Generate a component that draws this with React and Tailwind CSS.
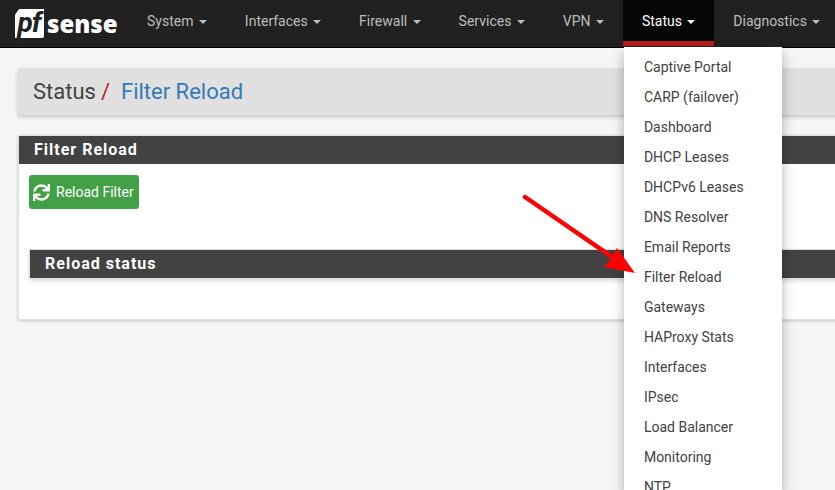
import React from 'react';
import { FaSync } from 'react-icons/fa';

const navItems = ['System', 'Interfaces', 'Firewall', 'Services', 'VPN', 'Status', 'Diagnostics'];

const statusItems = [
  'Captive Portal',
  'CARP (failover)',
  'Dashboard',
  'DHCP Leases',
  'DHCPv6 Leases',
  'DNS Resolver',
  'Email Reports',
  'Filter Reload',
  'Gateways',
  'HAProxy Stats',
  'Interfaces',
  'IPsec',
  'Load Balancer',
  'Monitoring',
  'NTP',
];

const Caret = () => (
  <span className="inline-block ml-[5.4px] align-middle w-0 h-0 border-x-[4px] border-x-transparent border-t-[4px] border-t-current" />
);

const Logo = () => (
  <div className="flex items-center w-[128px] pl-[15px] shrink-0">
    <div className="w-[29px] h-[29px] bg-white rounded-br-[2px] flex items-center justify-center [clip-path:polygon(14%_0,100%_0,100%_100%,0_100%,0_20%)]">
      <span className="text-[#212121] text-[28px] leading-none font-bold italic tracking-[-1px] -ml-[1px] -mt-[2px] font-['Roboto',sans-serif]">pf</span>
    </div>
    <span className="text-white text-[24px] leading-none font-extrabold ml-[3px] font-['Open_Sans',sans-serif]">sense</span>
  </div>
);

const Navbar = () => (
  <nav className="relative h-[48px] bg-[#212121] border-b border-black flex">
    <Logo />
    {navItems.map((item) => {
      const active = item === 'Status';
      return (
        <div
          key={item}
          className={`relative px-[19px] h-[46px] text-[14px] leading-[42px] whitespace-nowrap ${
            active
              ? 'bg-[#050505] text-white border-b-[5px] border-[#b71c1c]'
              : 'text-[#bdbdbd]'
          }`}
        >
          {item}
          <Caret />
          {active && <StatusMenu />}
        </div>
      );
    })}
  </nav>
);

const StatusMenu = () => (
  <ul className="absolute z-10 left-[1px] top-[47px] w-[158px] h-[443px] pt-[5px] bg-white shadow-[0_6px_12px_rgba(0,0,0,0.3)]">
    {statusItems.map((item) => (
      <li key={item} className="h-[30px] px-[20px] text-[14px] leading-[30px] text-[#424242]">
        {item}
      </li>
    ))}
  </ul>
);

const PanelHeading = ({ children }) => (
  <div className="h-[28px] bg-[#424242] px-[15px] text-white text-[16px] leading-[28px] font-bold tracking-[1px]">
    {children}
  </div>
);

const Arrow = () => (
  <svg className="absolute z-20 left-0 top-0 pointer-events-none" width="835" height="490">
    <path d="M525 197 L615 259" stroke="#ff0000" strokeWidth="4.5" strokeLinecap="round" />
    <path d="M635 273 L604 267 L612 258 L617 248 Z" fill="#ff0000" />
  </svg>
);

export default function App() {
  return (
    <div className="relative h-[490px] w-[835px] overflow-hidden bg-[#f5f5f5] font-['Roboto',sans-serif]">
      <Navbar />
      <div className="pl-[18px] pt-[20px] w-[1000px]">
        <div className="h-[47px] bg-[#e0e0e0] rounded-[2px] shadow-[0_2px_4px_rgba(0,0,0,0.2)] px-[15px] flex items-center text-[22px] leading-none">
          <span className="text-[#424242]">Status</span>
          <span className="text-[#b71c1c] ml-[5px]">/</span>
          <span className="text-[#337ab7] ml-[11px]">Filter Reload</span>
        </div>

        <div className="mt-[20px] h-[185px] bg-white border border-[#e0e0e0] shadow-[0_1px_3px_rgba(0,0,0,0.2)]">
          <PanelHeading>Filter Reload</PanelHeading>
          <div className="px-[10px] pt-[11px]">
            <button className="h-[34px] w-[110px] bg-[#43a047] rounded-[3px] text-white text-[14px] flex items-center pl-[4px]">
              <FaSync className="w-[17px] h-[17px] mr-[6px]" />
              Reload Filter
            </button>
            <div className="mt-[40px] border border-[#ddd] shadow-[0_2px_4px_rgba(0,0,0,0.15)]">
              <PanelHeading>Reload status</PanelHeading>
            </div>
          </div>
        </div>
      </div>
      <Arrow />
    </div>
  );
}
